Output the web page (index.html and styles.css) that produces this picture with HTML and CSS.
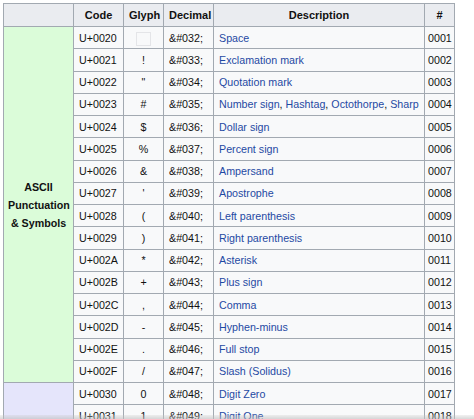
FILE: index.html
```html
<!DOCTYPE html>
<html>
<head>
<meta charset="utf-8">
<link rel="stylesheet" href="styles.css">
</head>
<body>
<table class="chart">
  <colgroup>
    <col class="c-group"><col class="c-code"><col class="c-glyph"><col class="c-dec"><col class="c-desc"><col class="c-num">
  </colgroup>
  <thead>
    <tr><th></th><th>Code</th><th>Glyph</th><th>Decimal</th><th>Description</th><th>#</th></tr>
  </thead>
  <tbody>
    <tr><td rowspan="16" class="group green">ASCII Punctuation &amp; Symbols</td><td>U+0020</td><td class="g"><span class="sp"></span></td><td>&amp;#032;</td><td><a>Space</a></td><td class="n">0001</td></tr>
    <tr><td>U+0021</td><td class="g">!</td><td>&amp;#033;</td><td><a>Exclamation mark</a></td><td class="n">0002</td></tr>
    <tr><td>U+0022</td><td class="g">"</td><td>&amp;#034;</td><td><a>Quotation mark</a></td><td class="n">0003</td></tr>
    <tr><td>U+0023</td><td class="g">#</td><td>&amp;#035;</td><td><a>Number sign</a>, <a>Hashtag</a>, <a>Octothorpe</a>, <a>Sharp</a></td><td class="n">0004</td></tr>
    <tr><td>U+0024</td><td class="g">$</td><td>&amp;#036;</td><td><a>Dollar sign</a></td><td class="n">0005</td></tr>
    <tr><td>U+0025</td><td class="g">%</td><td>&amp;#037;</td><td><a>Percent sign</a></td><td class="n">0006</td></tr>
    <tr><td>U+0026</td><td class="g">&amp;</td><td>&amp;#038;</td><td><a>Ampersand</a></td><td class="n">0007</td></tr>
    <tr><td>U+0027</td><td class="g">'</td><td>&amp;#039;</td><td><a>Apostrophe</a></td><td class="n">0008</td></tr>
    <tr><td>U+0028</td><td class="g">(</td><td>&amp;#040;</td><td><a>Left parenthesis</a></td><td class="n">0009</td></tr>
    <tr><td>U+0029</td><td class="g">)</td><td>&amp;#041;</td><td><a>Right parenthesis</a></td><td class="n">0010</td></tr>
    <tr><td>U+002A</td><td class="g">*</td><td>&amp;#042;</td><td><a>Asterisk</a></td><td class="n">0011</td></tr>
    <tr><td>U+002B</td><td class="g">+</td><td>&amp;#043;</td><td><a>Plus sign</a></td><td class="n">0012</td></tr>
    <tr><td>U+002C</td><td class="g">,</td><td>&amp;#044;</td><td><a>Comma</a></td><td class="n">0013</td></tr>
    <tr><td>U+002D</td><td class="g">-</td><td>&amp;#045;</td><td><a>Hyphen-minus</a></td><td class="n">0014</td></tr>
    <tr><td>U+002E</td><td class="g">.</td><td>&amp;#046;</td><td><a>Full stop</a></td><td class="n">0015</td></tr>
    <tr><td>U+002F</td><td class="g">/</td><td>&amp;#047;</td><td><a>Slash (Solidus)</a></td><td class="n">0016</td></tr>
    <tr><td rowspan="2" class="group lav"></td><td>U+0030</td><td class="g">0</td><td>&amp;#048;</td><td><a>Digit Zero</a></td><td class="n">0017</td></tr>
    <tr><td>U+0031</td><td class="g">1</td><td>&amp;#049;</td><td><a>Digit One</a></td><td class="n">0018</td></tr>
  </tbody>
</table>
<div class="edge-shade"></div>
</body>
</html>
```
FILE: styles.css
```css
html, body {
  margin: 0;
  padding: 0;
  background: #ffffff;
}
body {
  padding: 3px 0 0 3px;
  font-family: "Liberation Sans", Arial, Helvetica, sans-serif;
  font-size: 10.7px;
  color: #111111;
}
.chart {
  border-collapse: collapse;
  table-layout: fixed;
  width: 451px;
  background: #f8f9fa;
}
.c-group { width: 70px; }
.c-code { width: 50px; }
.c-glyph { width: 40px; }
.c-dec { width: 50px; }
.c-desc { width: 211px; }
.c-num { width: 30px; }
.chart th, .chart td {
  border: 1px solid #a2a9b1;
  padding: 0 5px;
  line-height: 18px;
  white-space: nowrap;
  overflow: hidden;
}
.chart th {
  background: #eaecf0;
  font-weight: bold;
  font-size: 11px;
  text-align: center;
  height: 22px;
  color: #111111;
}
.chart tbody tr {
  height: 22.25px;
}
.chart td {
  text-align: left;
  background: #f8f9fa;
}
.chart td.g {
  text-align: center;
}
.chart td.n {
  padding: 0 3px;
}
.chart td.group {
  white-space: normal;
  text-align: center;
  font-weight: bold;
  vertical-align: middle;
  padding: 0 4px;
}
.chart td.green { background: #dbfcd9; }
.chart td.lav { background: #e5e5fb; }
.chart a {
  color: #1f49a3;
  text-decoration: none;
}
.sp {
  display: inline-block;
  width: 13px;
  height: 12px;
  border: 1px solid #e4e5e8;
  vertical-align: middle;
}
.edge-shade {
  position: fixed;
  left: 0;
  right: 0;
  bottom: 0;
  height: 4px;
  background: linear-gradient(to bottom, rgba(200,200,200,0.25), rgba(190,190,190,0.6));
}
```
